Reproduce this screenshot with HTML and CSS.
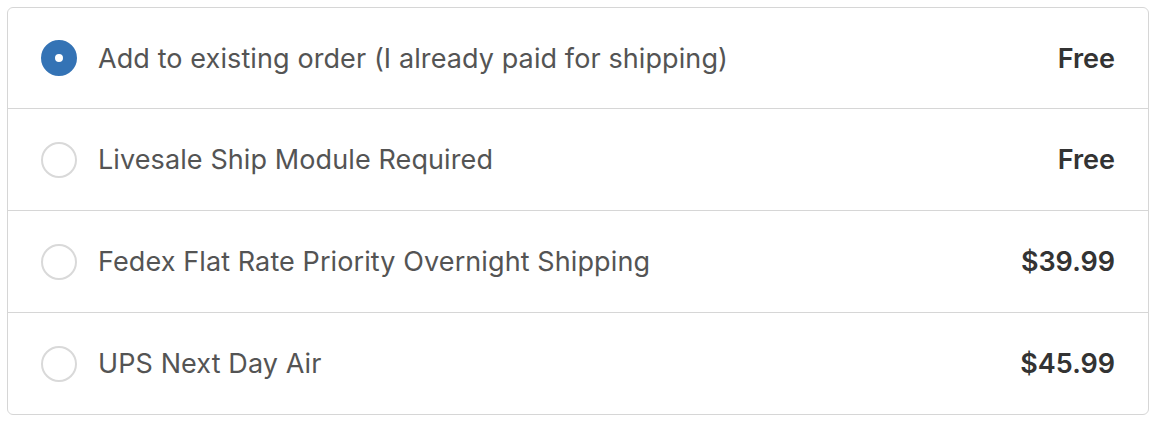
FILE: index.html
```html
<!DOCTYPE html>
<html lang="en">
<head>
    <meta charset="UTF-8">
    <title>Shipping method</title>
    <link rel="stylesheet" href="styles.css">
</head>
<body>
    <div class="shipping-box">
        <label class="shipping-row">
            <input type="radio" name="ship" class="ship-radio" checked>
            <span class="ship-name">Add to existing order (I already paid for shipping)</span>
            <span class="ship-price">Free</span>
        </label>
        <label class="shipping-row">
            <input type="radio" name="ship" class="ship-radio">
            <span class="ship-name">Livesale Ship Module Required</span>
            <span class="ship-price">Free</span>
        </label>
        <label class="shipping-row">
            <input type="radio" name="ship" class="ship-radio">
            <span class="ship-name">Fedex Flat Rate Priority Overnight Shipping</span>
            <span class="ship-price">$39.99</span>
        </label>
        <label class="shipping-row">
            <input type="radio" name="ship" class="ship-radio">
            <span class="ship-name">UPS Next Day Air</span>
            <span class="ship-price">$45.99</span>
        </label>
    </div>
</body>
</html>
```

FILE: styles.css
```css
body {
    margin: 7px;
    background-color: #ffffff;
    font-family: Inter, "Liberation Sans", Arial, sans-serif;
}

.shipping-box {
    border: 1px solid #d6d6d6;
    border-radius: 6px;
}

.shipping-row {
    display: flex;
    align-items: center;
    height: 101px;
    padding: 0 33px;
    border-top: 1px solid #d6d6d6;
    cursor: pointer;
}

.shipping-row:first-child {
    border-top: none;
    height: 100px;
}

.ship-radio {
    appearance: none;
    margin: 0 21px 0 0;
    width: 36px;
    height: 36px;
    border: 2px solid #d9d9d9;
    border-radius: 50%;
    background-color: #fff;
    flex-shrink: 0;
}

.ship-radio:checked {
    border: 14px solid #3473b5;
}

.ship-name {
    flex: 1;
    font-size: 27px;
    letter-spacing: 0.1px;
    color: #545454;
}

.ship-price {
    font-size: 27px;
    font-weight: 600;
    color: #333333;
}
```
